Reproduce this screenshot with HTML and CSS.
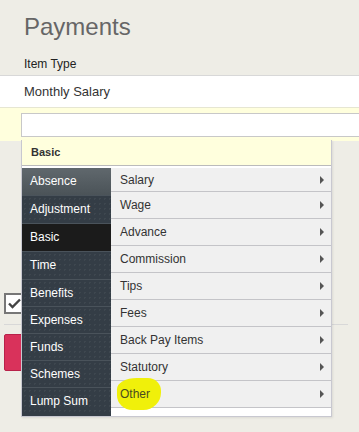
FILE: index.html
```html
<!DOCTYPE html>
<html lang="en">
<head>
    <meta charset="UTF-8">
    <meta name="viewport" content="width=device-width, initial-scale=1.0">
    <title>Payments</title>
    <link rel="stylesheet" href="styles.css">
</head>
<body>
    <div class="page">
        <h1 class="title">Payments</h1>
        <div class="field-label">Item Type</div>
        <div class="field-value">Monthly Salary</div>
        <div class="search-row">
            <input class="search-input" type="text">
        </div>

        <div class="below">
            <span class="checkbox">
                <svg width="13" height="11" viewBox="0 0 13 11">
                    <path d="M1 5.5 L4.5 9 L12 1.5" fill="none" stroke="#444" stroke-width="2.4"/>
                </svg>
            </span>
            <div class="divider"></div>
            <button class="save-btn"></button>
        </div>

        <div class="picker">
            <div class="picker-head">Basic</div>
            <div class="picker-body">
                <ul class="groups">
                    <li class="group hover">Absence</li>
                    <li class="group">Adjustment</li>
                    <li class="group selected">Basic</li>
                    <li class="group">Time</li>
                    <li class="group short">Benefits</li>
                    <li class="group short">Expenses</li>
                    <li class="group short">Funds</li>
                    <li class="group short">Schemes</li>
                    <li class="group short">Lump Sum</li>
                </ul>
                <ul class="items">
                    <li class="item first">Salary<span class="arrow"></span></li>
                    <li class="item">Wage<span class="arrow"></span></li>
                    <li class="item">Advance<span class="arrow"></span></li>
                    <li class="item">Commission<span class="arrow"></span></li>
                    <li class="item">Tips<span class="arrow"></span></li>
                    <li class="item">Fees<span class="arrow"></span></li>
                    <li class="item">Back Pay Items<span class="arrow"></span></li>
                    <li class="item">Statutory<span class="arrow"></span></li>
                    <li class="item"><span class="marker"></span><span class="item-text">Other</span><span class="arrow"></span></li>
                </ul>
            </div>
        </div>
    </div>
</body>
</html>
```

FILE: styles.css
```css
body {
    margin: 0;
    background: #eeede6;
    font-family: "Liberation Sans", Arial, sans-serif;
    overflow: hidden;
}
.page {
    position: relative;
    width: 359px;
    height: 432px;
    overflow: hidden;
}
.title {
    margin: 0;
    padding: 13px 0 0 24px;
    font-size: 24px;
    line-height: 28px;
    font-weight: normal;
    color: #666;
}
.field-label {
    padding: 15px 0 3px 24px;
    font-size: 12px;
    line-height: 16px;
    color: #222;
}
.field-value {
    background: #fff;
    border-top: 1px solid #d8d8d8;
    height: 31px;
    line-height: 31px;
    padding-left: 24px;
    font-size: 13px;
    color: #333;
}
.search-row {
    background: #ffffdd;
    border-top: 1px solid #e6e6d2;
    padding: 5px 0 4px 21px;
}
.search-input {
    display: block;
    box-sizing: border-box;
    width: 360px;
    height: 24px;
    margin: 0;
    border: 1px solid #c8c8c8;
    background: #fff;
}
.below {
    padding: 152px 0 0 4px;
}
.checkbox {
    display: flex;
    align-items: center;
    justify-content: center;
    box-sizing: border-box;
    width: 21px;
    height: 21px;
    border: 2px solid #777;
    background: #fff;
}
.divider {
    width: 344px;
    height: 1px;
    margin-top: 10px;
    background: #d8d8d8;
}
.save-btn {
    display: block;
    width: 90px;
    height: 37px;
    margin-top: 9px;
    border: 1px solid #b8224a;
    border-radius: 2px;
    background: #d9325b;
}
.picker {
    position: absolute;
    left: 21px;
    top: 140px;
    width: 311px;
    box-sizing: border-box;
    border: 1px solid #c8c8d0;
    border-top: 0;
    background: #fff;
    box-shadow: 1px 1px 2px rgba(0, 0, 0, 0.08);
}
.picker-head {
    background: #ffffdd;
    height: 25px;
    line-height: 25px;
    padding-left: 9px;
    font-size: 11px;
    font-weight: bold;
    color: #333;
    border-bottom: 1px solid #bbb;
    margin-bottom: 2px;
}
.picker-body {
    display: flex;
}
.groups, .items {
    list-style: none;
    margin: 0;
    padding: 0;
}
.groups {
    width: 89px;
    background: #343d46;
}
.group {
    height: 27px;
    line-height: 27px;
    padding-left: 8px;
    font-size: 12px;
    color: #fff;
    border-bottom: 1px solid #4a535b;
    background-color: #343d46;
    background-image: radial-gradient(rgba(255, 255, 255, 0.05) 1px, transparent 1px);
    background-size: 5px 5px;
}
.group.short {
    height: 26px;
    line-height: 26px;
}
.group:last-child {
    height: 27px;
    border-bottom: 0;
}
.group.hover {
    background: linear-gradient(#60686d, #4b5358);
}
.group.selected {
    background: #1b1b1b;
}
.items {
    flex: 1;
    background: #fff;
    padding-bottom: 8px;
}
.item {
    position: relative;
    display: flex;
    align-items: center;
    justify-content: space-between;
    height: 26px;
    padding: 0 7px 0 9px;
    font-size: 12px;
    color: #333;
    background: #f0f0f0;
    border-bottom: 1px solid #c4c4c8;
}
.item.first {
    height: 23px;
}
.item-text {
    position: relative;
    color: #4a4a20;
}
.arrow {
    width: 0;
    height: 0;
    border-top: 4px solid transparent;
    border-bottom: 4px solid transparent;
    border-left: 4px solid #555;
}
.marker {
    position: absolute;
    left: 6px;
    top: -3px;
    width: 44px;
    height: 32px;
    background: #f0f00a;
    border-radius: 45% 30% 40% 35% / 35% 40% 55% 45%;
}
```
